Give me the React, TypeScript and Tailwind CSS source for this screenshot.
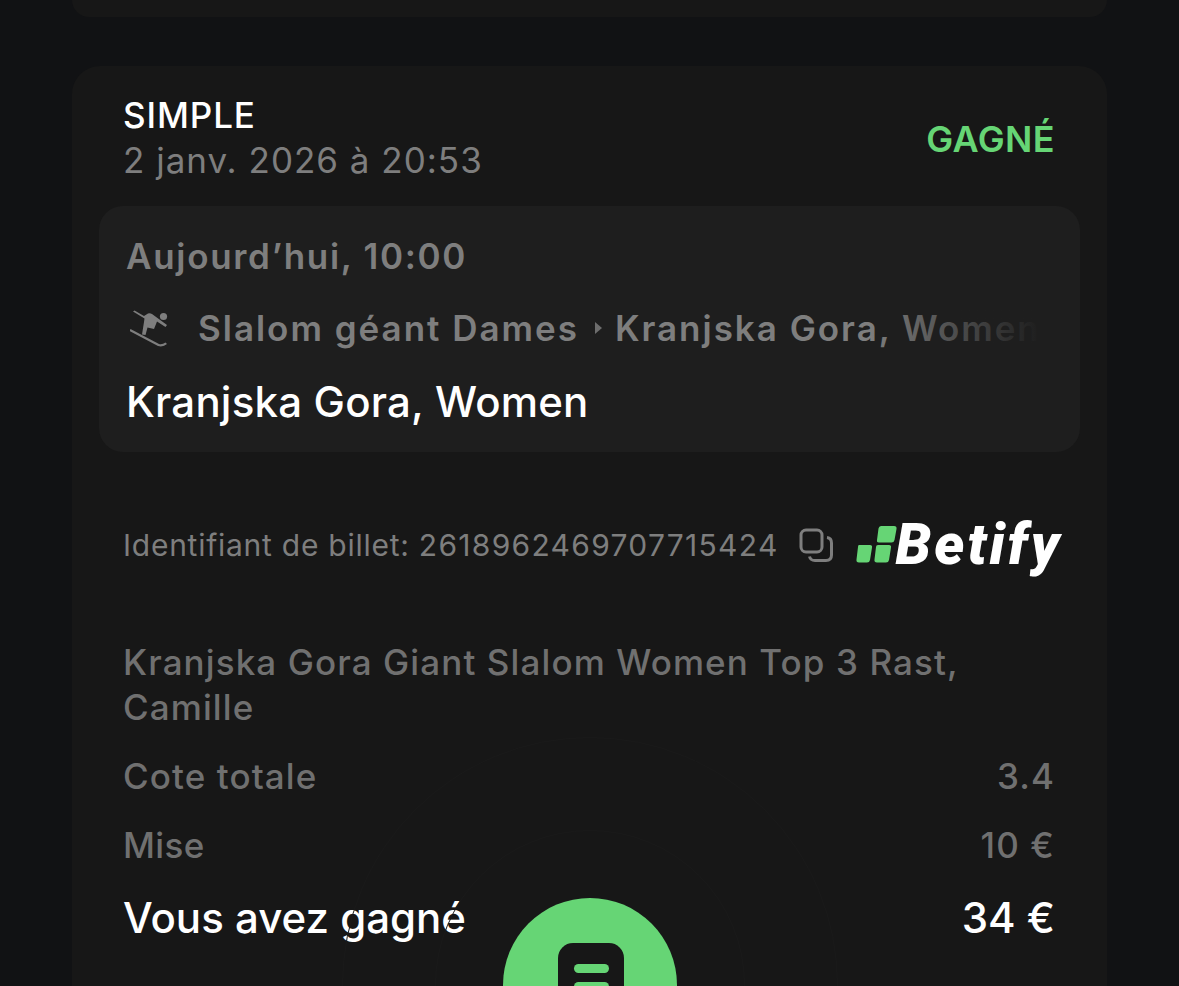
export default function App() {
  const font = { fontFamily: 'Inter, "Liberation Sans", sans-serif' };
  return (
    <div style={font} className="relative h-[986px] w-full overflow-hidden bg-[#111214] px-[72px]">
      <div className="h-[17px] rounded-b-[28px] bg-[#171717]" />
      <div className="mt-[49px] h-[960px] rounded-[28px] bg-[#171717] pt-[27px]">
        <div className="flex items-center justify-between pl-[51px] pr-[52px]">
          <div>
            <div className="text-[35px] leading-[44px] font-medium tracking-[0.9px] text-white">SIMPLE</div>
            <div className="mt-[1px] text-[35px] leading-[44px] tracking-[1px] text-[#7e7e7e]">2 janv. 2026 à 20:53</div>
          </div>
          <div className="mt-[2px] text-[36px] leading-[44px] font-semibold tracking-[0.4px] text-[#66d575]">GAGNÉ</div>
        </div>

        <div className="mx-[27px] mt-[24px] rounded-[24px] bg-[#1e1e1e] pl-[27px] pr-[28px] pt-[28px] pb-[25px]">
          <div className="text-[35px] leading-[44px] font-semibold tracking-[1.7px] text-[#7e7e7e]">Aujourd’hui, 10:00</div>
          <div className="relative mt-[28px] flex h-[44px] items-center overflow-hidden whitespace-nowrap pr-[40px]">
            <svg width="40" height="40" viewBox="0 0 40 40" className="ml-[4px] shrink-0 text-[#7e7e7e]" fill="currentColor">
              <circle cx="33.5" cy="8.5" r="3.6" />
              <path d="M3 3.500 L4.500 2.500 L14 8 L18 5.500 Q20 5 22 6 L37 17 L35.500 19 L27 13.500 L24 21 L17.500 19.500 L15.500 27 L12 26.500 L14 14 L14.500 10.500 Z" />
              <path d="M0.500 21 L29 36 Q32 37 35.500 34.500 L37 36 Q33 39.500 28 38 L-0.500 23 Z" />
            </svg>
            <span className="ml-[28px] text-[35px] leading-[44px] font-semibold tracking-[1.98px] text-[#7e7e7e]">Slalom géant Dames</span>
            <svg width="12" height="16" viewBox="0 0 12 16" className="ml-[14px] mr-[10px] shrink-0 text-[#6d6d6d]" fill="currentColor">
              <path d="M2 2 L9 8 L2 14 Z" />
            </svg>
            <span className="text-[35px] leading-[44px] font-semibold tracking-[1.98px] text-[#7e7e7e]">Kranjska Gora, Women</span>
            <div className="absolute right-[13px] top-0 h-full w-[170px] bg-gradient-to-r from-[#1e1e1e00] to-[#1e1e1e]" />
            <div className="absolute right-0 top-0 h-full w-[14px] bg-[#1e1e1e]" />
          </div>
          <div className="mt-[27px] text-[42px] leading-[50px] font-medium tracking-[0.2px] text-white">Kranjska Gora, Women</div>
        </div>

        <div className="mt-[68px] flex items-center pl-[51px]">
          <span className="text-[30px] leading-[50px] tracking-[0.74px] text-[#7e7e7e]">Identifiant de billet: <span className="tracking-[1.3px]">2618962469707715424</span></span>
          <svg width="36" height="36" viewBox="0 0 36 36" fill="none" stroke="#7e7e7e" strokeWidth="3" className="ml-[19px] shrink-0">
            <rect x="3" y="3" width="21" height="22" rx="5" />
            <path d="M29 10.5 Q33.5 11 33.5 16 V28 Q33.5 33.5 28 33.5 H17 Q12.5 33.5 11.5 29.5" />
          </svg>
          <div className="ml-[22px] flex items-center">
            <svg width="42" height="40" viewBox="0 0 42 40" className="shrink-0" fill="#66d575">
              <path d="M3 20 H14 Q16.5 20 16 22.5 L14 35 Q13.5 37.500 11 37.500 H3 Q0 37.500 0.5 34.500 L2 22 Q2 20 3 20Z" />
              <path d="M22 20 H33 Q35.500 20 35 22.5 L33 35 Q32.500 37.500 30 37.500 H21 Q18 37.500 18.500 34.500 L20 22 Q20 20 22 20Z" />
              <path d="M25 1 H38 Q41 1 40.500 4 L38.500 15 Q38 17.500 35.500 17.500 H23 Q20.500 17.500 21 15 L22.500 3.500 Q23 1 25 1Z" />
            </svg>
            <span style={{ fontFamily: 'Roboto, Inter, sans-serif' }} className="-ml-[2px] text-[57px] leading-[50px] font-black italic tracking-[3px] text-white">Betify</span>
          </div>
        </div>

        <div className="mt-[70px] pl-[51px] pr-[52px]">
          <div className="text-[35px] leading-[45px] font-medium tracking-[1.1px] text-[#707070]">
            Kranjska Gora Giant Slalom Women Top 3 Rast,
            <br />
            Camille
          </div>
          <div className="mt-[24px] flex items-center justify-between text-[35px] leading-[44px] font-medium tracking-[1.1px] text-[#707070]">
            <span>Cote totale</span>
            <span>3.4</span>
          </div>
          <div className="mt-[25px] flex items-center justify-between text-[35px] leading-[44px] font-medium tracking-[1.1px] text-[#707070]">
            <span className="tracking-[0.4px]">Mise</span>
            <span>10 €</span>
          </div>
          <div className="mt-[28px] flex items-center justify-between text-[42px] leading-[46px] font-medium text-white">
            <span>Vous avez gagné</span>
            <span>34 €</span>
          </div>
        </div>
      </div>

      <div className="absolute left-[342px] top-[737px] h-[496px] w-[496px] rounded-full border border-[#1a1a1a]" />
      <div className="absolute left-[435px] top-[830px] h-[310px] w-[310px] rounded-full border border-[#1a1a1a]" />
      <div className="absolute left-[503px] top-[898px] flex h-[174px] w-[174px] justify-center rounded-full bg-[#66d575] pl-[2px] pt-[45px]">
        <div className="flex h-[80px] w-[66px] flex-col items-center gap-[9px] rounded-[15px] bg-[#171717] pt-[21px]">
          <div className="h-[9px] w-[35px] rounded-full bg-[#66d575]" />
          <div className="h-[9px] w-[35px] rounded-full bg-[#66d575]" />
        </div>
      </div>
    </div>
  );
}
